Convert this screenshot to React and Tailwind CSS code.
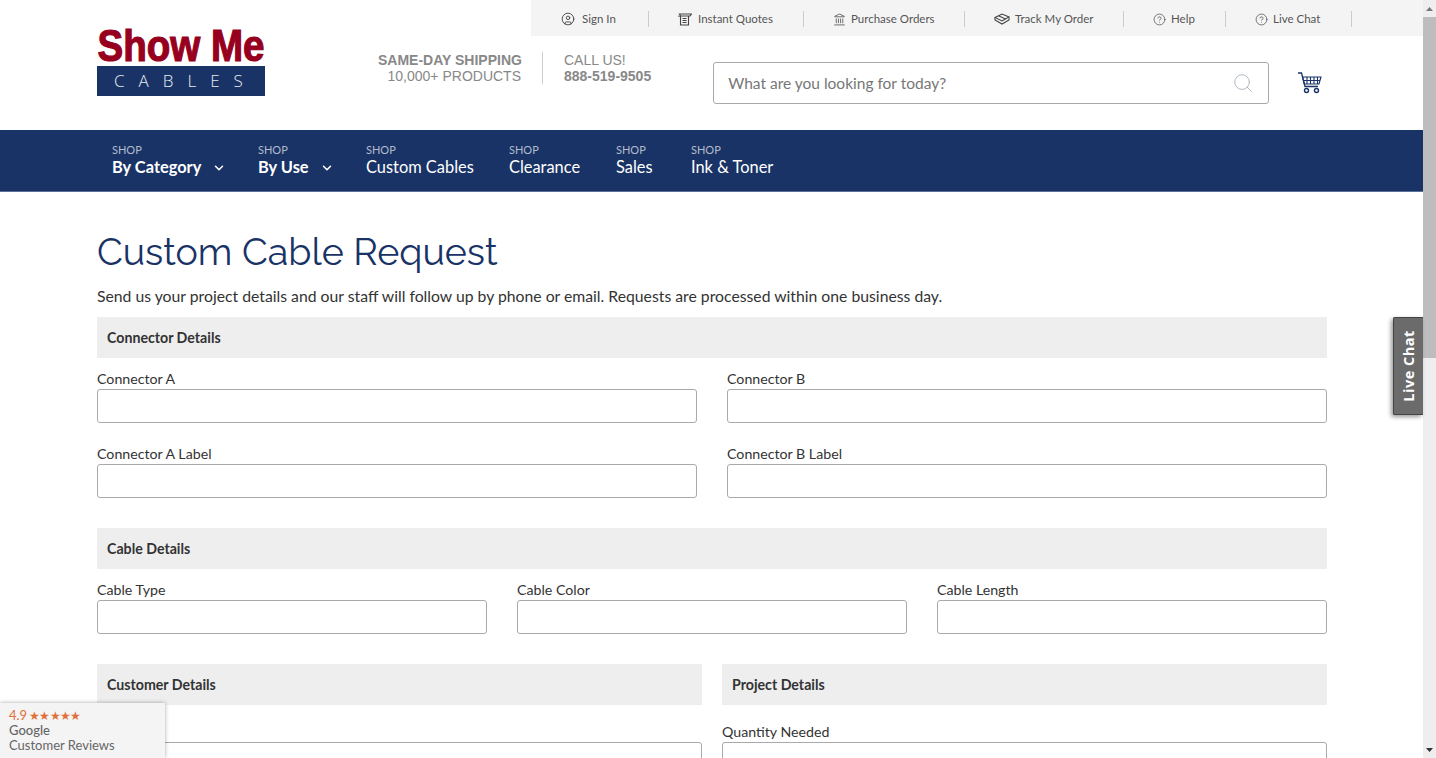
import { CircleUser, Landmark, CircleHelp, Search, ChevronDown } from 'lucide-react';

const sans = "font-['Lato',sans-serif]";

const QuoteIcon = () => (
  <svg width="14" height="13" viewBox="0 0 14 13" fill="none" stroke="#444" strokeWidth="1.1" className="-ml-[1px]">
    <path d="M1.500 1h12l-1.500 2H2.500z" />
    <path d="M1 4v-1.500M2.500 3v9h8V3" />
    <path d="M4.500 5.500h4M4.500 7.500h4M4.500 9.500h4" />
  </svg>
);

const BoxIcon = () => (
  <svg width="16" height="12" viewBox="0 0 16 12" fill="none" stroke="#444" strokeWidth="1.1" className="-ml-[1px]">
    <path d="M1 4.500 8 1l7 3-7 4z" />
    <path d="M1 4.500V7l7 4 7-4V4.500" />
    <path d="M4.500 2.800l7 3.200" />
  </svg>
);

const CartIcon = () => (
  <svg width="24" height="22" viewBox="0 0 24 22" fill="none" stroke="#193366" strokeWidth="1.1">
    <path d="M0 1h3.500l3.500 13.500h13" strokeWidth="1.300" />
    <path d="M4.500 5h18.500l-2 7H6.300z" />
    <path d="M9 5v7M12.500 5v7M16 5v7M19.500 5v7M5 8.500h17" />
    <circle cx="8.500" cy="18.500" r="2" strokeWidth="1.400" />
    <circle cx="18.500" cy="18.500" r="2" strokeWidth="1.400" />
  </svg>
);

const topLinks = [
  { label: 'Sign In', icon: <CircleUser size={14} strokeWidth={1.4} className="text-[#333]" />, gap: 'gap-[7px]', width: 'w-[118px]' },
  { label: 'Instant Quotes', icon: <QuoteIcon />, gap: 'gap-[6px]', width: 'w-[155px]' },
  { label: 'Purchase Orders', icon: <Landmark size={13} strokeWidth={1.4} className="-ml-[1px] text-[#444]" />, gap: 'gap-[5px]', width: 'w-[161px]' },
  { label: 'Track My Order', icon: <BoxIcon />, gap: 'gap-[5px]', width: 'w-[159px]' },
  { label: 'Help', icon: <CircleHelp size={13} strokeWidth={1.3} className="-ml-[1px] text-[#444]" />, gap: 'gap-[5px]', width: 'w-[102px]' },
  { label: 'Live Chat', icon: <CircleHelp size={13} strokeWidth={1.3} className="-ml-[1px] text-[#444]" />, gap: 'gap-[5px]', width: 'w-[126px]' },
];

const navItems = [
  { label: 'By Category', bold: true, width: 'w-[146px]' },
  { label: 'By Use', bold: true, width: 'w-[108px]' },
  { label: 'Custom Cables', width: 'w-[143px]' },
  { label: 'Clearance', width: 'w-[107px]' },
  { label: 'Sales', width: 'w-[75px]' },
  { label: 'Ink & Toner', width: 'w-[100px]' },
];

function Field({ label }) {
  return (
    <div>
      <label className="block h-[21px] text-[14.200px] leading-[22px] text-[#333]">{label}</label>
      <div className="h-[34px] rounded-[3px] border border-[#aaa] bg-white"></div>
    </div>
  );
}

function SectionBar({ children }) {
  return (
    <div className="flex h-[41px] items-center bg-[#eee] pl-[10px] text-[14.200px] font-bold text-[#333]">
      {children}
    </div>
  );
}

export default function App() {
  return (
    <div className={`relative flex h-[758px] overflow-hidden bg-white ${sans}`}>
      <div className="min-w-0 flex-1">
        {/* Top links */}
        <header className="h-[130px]">
          <div className="ml-[531px] flex h-[36px] items-center bg-[#f4f4f4] pt-[2px]">
            {topLinks.map(l => (
              <div key={l.label} className={`flex h-[16px] items-center border-r border-[#ccc] pl-[30px] ${l.width}`}>
                <span className={`flex items-center ${l.gap} whitespace-nowrap text-[11.500px] text-[#555]`}>
                  {l.icon}
                  {l.label}
                </span>
              </div>
            ))}
          </div>

          <div className="-mt-[7px] flex items-start pl-[97px]">
            <svg width="168" height="67" viewBox="0 0 168 67" className="shrink-0 overflow-visible">
              <text x="0.500" y="32" textLength="167" lengthAdjust="spacingAndGlyphs" fontFamily="Liberation Sans" fontWeight="700" fontSize="44" fill="#96001e" stroke="#96001e" strokeWidth="1.200">
                Show Me
              </text>
              <rect x="0" y="37" width="168" height="30" fill="#193366" />
              <text x="17" y="58" fontFamily="Open Sans" fontSize="17" fill="#e8ebf0" letterSpacing="14" fontWeight="300">
                CABLES
              </text>
            </svg>

            <div className="mt-[23px] ml-[113px] w-[143px] whitespace-nowrap text-right font-['Liberation_Sans',sans-serif] text-[14px] leading-[16px] text-[#888]">
              <div className="font-bold">SAME-DAY SHIPPING</div>
              <div>10,000+ PRODUCTS</div>
            </div>
            <div className="mt-[23px] ml-[21px] h-[32px] border-l border-[#ccc] pl-[21px] whitespace-nowrap font-['Liberation_Sans',sans-serif] text-[14px] leading-[16px] text-[#888]">
              <div>CALL US!</div>
              <div className="font-bold">888-519-9505</div>
            </div>

            <div className="mt-[33px] ml-[62px] flex h-[42px] w-[556px] items-center justify-between rounded-[3px] border border-[#aaa] pr-[14px] pl-[14px]">
              <span className="pt-[2px] text-[15.500px] text-[#777]">What are you looking for today?</span>
              <Search size={22} strokeWidth={1} className="text-[#a9b2bd]" />
            </div>
            <div className="mt-[43px] ml-[29px]">
              <CartIcon />
            </div>
          </div>
        </header>

        {/* Main nav */}
        <nav className="flex h-[62px] items-center border-b border-[#5a7099] bg-[#193366] pb-[2px] pl-[112px]">
          {navItems.map(n => (
            <div key={n.label} className={`${n.width} shrink-0`}>
              <div className="text-[11px] leading-[14px] text-[#b3bccb]">SHOP</div>
              <div className={`-mt-[1px] flex items-center gap-[11px] text-[16.400px] leading-[21px] text-white ${n.bold ? 'font-bold' : ''}`}>
                {n.label}
                {n.bold && <ChevronDown size={14} strokeWidth={2.6} className="mt-[3px]" />}
              </div>
            </div>
          ))}
        </nav>

        {/* Form */}
        <main className="mr-[96px] ml-[97px]">
          <h1 className="mt-[36px] h-[48px] font-['Raleway','Lato',sans-serif] text-[37.600px] leading-[48px] text-[#193366]">
            Custom Cable Request
          </h1>
          <p className="mt-[8px] h-[24px] text-[15.750px] leading-[24px] whitespace-nowrap text-[#333]">
            Send us your project details and our staff will follow up by phone or email. Requests are processed within one business day.
          </p>

          <div className="mt-[9px]">
            <SectionBar>Connector Details</SectionBar>
            <div className="mt-[10px] grid grid-cols-2 gap-x-[30px] gap-y-[20px]">
              <Field label="Connector A" />
              <Field label="Connector B" />
              <Field label="Connector A Label" />
              <Field label="Connector B Label" />
            </div>
          </div>

          <div className="mt-[30px]">
            <SectionBar>Cable Details</SectionBar>
            <div className="mt-[10px] grid grid-cols-3 gap-x-[30px]">
              <Field label="Cable Type" />
              <Field label="Cable Color" />
              <Field label="Cable Length" />
            </div>
          </div>

          <div className="mt-[30px] grid grid-cols-2 gap-x-[20px]">
            <div>
              <SectionBar>Customer Details</SectionBar>
              <div className="mt-[16px]"><Field label="Name" /></div>
            </div>
            <div>
              <SectionBar>Project Details</SectionBar>
              <div className="mt-[16px]"><Field label="Quantity Needed" /></div>
            </div>
          </div>
        </main>
      </div>

      {/* Fake scrollbar */}
      <div className="flex w-[13px] shrink-0 flex-col bg-[#eeeeee]">
        <div className="flex h-[17px] items-center justify-center text-[#777]">
          <svg width="7" height="4" viewBox="0 0 7 4"><path d="M3.500 0 7 4H0z" fill="currentColor" /></svg>
        </div>
        <div className="h-[341px] bg-[#bdbdbd]"></div>
        <div className="flex-1"></div>
        <div className="flex h-[17px] items-center justify-center text-[#333]">
          <svg width="7" height="4" viewBox="0 0 7 4"><path d="M0 0h7L3.500 4z" fill="currentColor" /></svg>
        </div>
      </div>

      {/* Live chat tab */}
      <div className="absolute top-[317px] right-[13px] flex h-[98px] w-[30px] items-center justify-center rounded-l-[2px] border border-r-0 border-[#444] bg-[#6b6b6b] shadow-[-2px_2px_4px_rgba(0,0,0,0.4)]">
        <span className="-rotate-90 font-['Open_Sans',sans-serif] text-[14.500px] font-bold tracking-[0.5px] whitespace-nowrap text-white">Live Chat</span>
      </div>

      {/* Google reviews badge */}
      <div className="absolute bottom-0 left-0 h-[55px] w-[165px] bg-[#f4f4f4] pt-[5px] pl-[9px] text-[#666] shadow-[0_0_4px_rgba(0,0,0,0.35)]">
        <div className="flex items-center gap-[2px] text-[13px] leading-[15px] text-[#e0703a]">
          <span>4.9</span>
          <span className="text-[12px] tracking-[-0.8px]">★★★★★</span>
        </div>
        <div className="text-[13px] leading-[15px] font-medium">Google</div>
        <div className="text-[13px] leading-[15px] whitespace-nowrap">Customer Reviews</div>
      </div>
    </div>
  );
}
